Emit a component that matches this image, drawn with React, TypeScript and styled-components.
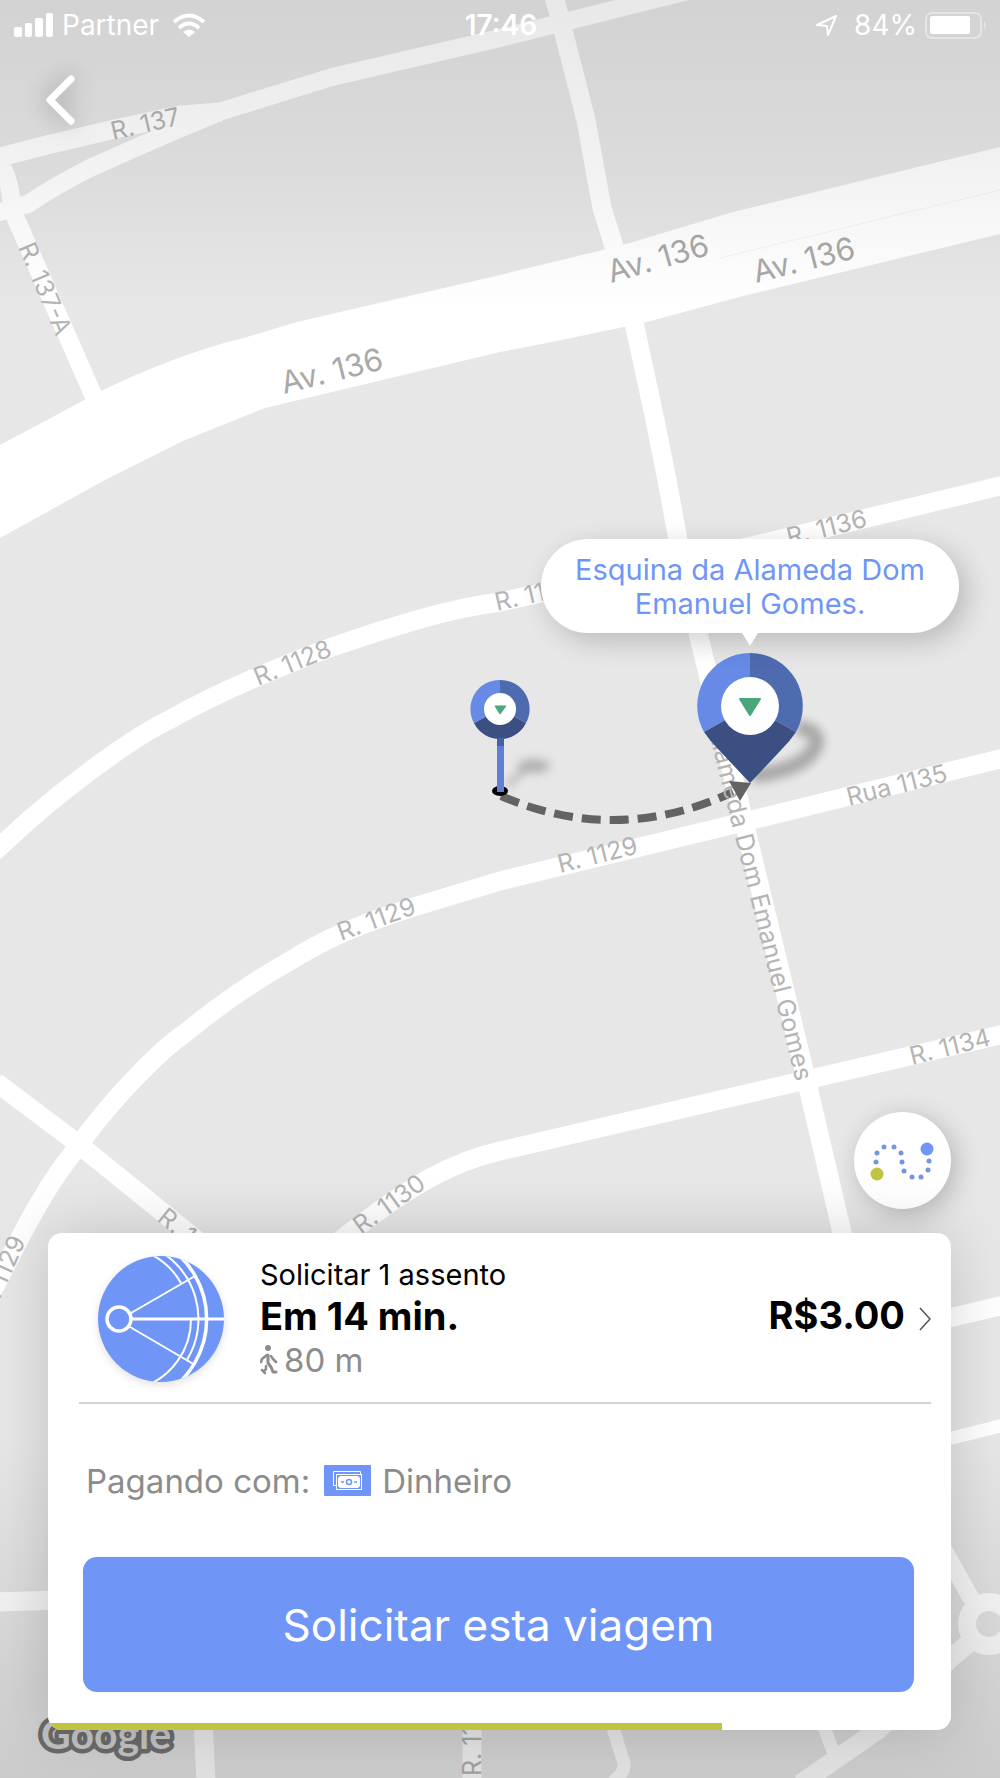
import React from "react";
import styled, { createGlobalStyle } from "styled-components";

const BLUE = "#6f95f7";
const LIME = "#bfc540";

const GlobalStyle = createGlobalStyle`
  * { box-sizing: border-box; }
  body {
    margin: 0;
    background: #e7e7e7;
    font-family: Inter, "Liberation Sans", sans-serif;
  }
  button { font-family: inherit; border: 0; padding: 0; cursor: pointer; }
`;

const Screen = styled.main`
  position: relative;
  display: flex;
  flex-direction: column;
  min-height: 100vh;
  overflow: hidden;
  isolation: isolate;
`;

const MapLayer = styled.div`
  position: absolute;
  inset: 0;
  z-index: -1;
`;

const MapCanvas = styled.svg`
  position: absolute;
  inset: 0;
  width: 100%;
  height: 100%;
`;

const Shade = styled.div`
  position: absolute;
  inset: 0;
  background:
    linear-gradient(rgba(0, 0, 0, 0.09), rgba(0, 0, 0, 0.05) 170px, transparent 310px),
    linear-gradient(to top, rgba(0, 0, 0, 0.12), transparent 340px);
`;

const StreetLabel = styled.text<{ $large?: boolean }>`
  font-family: Inter, sans-serif;
  font-size: ${(p) => (p.$large ? 31 : 25)}px;
  fill: ${(p) => (p.$large ? "#a9a9a9" : "#b5b5b5")};
`;

const Watermark = styled.text`
  font-family: Lato, sans-serif;
  font-size: 41px;
  font-weight: 700;
  fill: #dadada;
  stroke: #777;
  stroke-width: 9px;
  stroke-linejoin: round;
  paint-order: stroke;
`;

const Bubble = styled.div`
  position: absolute;
  left: 75%;
  top: 539px;
  width: 418px;
  padding: 14px 24px 12px;
  transform: translateX(-50%);
  border-radius: 47px;
  background: #fff;
  color: ${BLUE};
  font-size: 29px;
  line-height: 34px;
  text-align: center;
  box-shadow: 8px 8px 28px rgba(0, 0, 0, 0.2);

  &::after {
    content: "";
    position: absolute;
    top: 100%;
    left: 50%;
    margin-left: -8px;
    border: 8px solid transparent;
    border-top: 13px solid #fff;
    border-bottom: 0;
  }
`;

const StatusBar = styled.header`
  display: grid;
  grid-template-columns: 1fr auto 1fr;
  align-items: center;
  height: 50px;
  padding: 0 12px 0 14px;
  color: #fff;
  font-size: 28px;
  line-height: 32px;
`;

const StatusGroup = styled.div<{ $end?: boolean }>`
  display: flex;
  align-items: center;
  gap: ${(p) => (p.$end ? 8 : 9)}px;
  justify-content: ${(p) => (p.$end ? "flex-end" : "flex-start")};
`;

const Carrier = styled.span`
  margin-right: 4px;
`;

const Clock = styled.time`
  font-weight: 600;
`;

const LocationIcon = styled.svg`
  margin-right: 8px;
`;

const BackButton = styled.button`
  align-self: flex-start;
  width: 60px;
  height: 64px;
  margin: 18px 0 0 29px;
  background: none;
  svg {
    display: block;
    overflow: visible;
    filter: drop-shadow(0 0 12px rgba(0, 0, 0, 0.35));
  }
`;

const BottomArea = styled.section`
  display: flex;
  flex-direction: column;
  gap: 24px;
  margin-top: auto;
  padding: 0 49px 48px 48px;
`;

const RouteButton = styled.button`
  align-self: flex-end;
  width: 97px;
  height: 97px;
  border-radius: 50%;
  background: #fff;
  box-shadow: 5px 5px 26px rgba(0, 0, 0, 0.22);
`;

const Card = styled.article`
  display: flex;
  flex-direction: column;
  border-radius: 14px;
  background: #fff;
  overflow: hidden;
  box-shadow: 0 0 60px rgba(0, 0, 0, 0.17);
`;

const TripRow = styled.button`
  display: flex;
  align-items: center;
  margin: 0 20px 0 31px;
  padding: 23px 0 20px 19px;
  border-bottom: 2px solid #d2d2d2;
  background: none;
  color: #000;
  text-align: left;
`;

const TripBadge = styled.svg`
  flex: none;
  margin-right: 36px;
  border-radius: 50%;
  background: ${BLUE};
  box-shadow: 0 3px 8px rgba(0, 0, 0, 0.12);
`;

const TripInfo = styled.span`
  display: flex;
  flex: 1;
  flex-direction: column;
`;

const Seats = styled.span`
  font-size: 29px;
  line-height: 36px;
`;

const Eta = styled.strong`
  font-size: 38px;
  line-height: 46px;
`;

const Walk = styled.span`
  display: flex;
  align-items: center;
  gap: 6px;
  color: #8c8c8c;
  font-size: 33px;
  line-height: 42px;
`;

const Price = styled.strong`
  padding: 0 14px 8px 0;
  font-size: 38px;
  line-height: 46px;
`;

const Payment = styled.div`
  display: flex;
  align-items: center;
  height: 153px;
  padding: 0 38px;
  color: #8c8c8c;
  font-size: 33px;
  line-height: 42px;
`;

const CashIcon = styled.svg`
  margin: 0 11px 0 14px;
`;

const RequestButton = styled.button`
  height: 135px;
  margin: 0 37px 31px 35px;
  border-radius: 14px;
  background: ${BLUE};
  color: #fff;
  font-size: 44px;
  line-height: 56px;
`;

const Progress = styled.div`
  height: 7px;
`;

const ProgressFill = styled.div`
  height: 100%;
  background: ${LIME};
`;

const roads: { d: string; w?: number }[] = [
  { d: "M0 157 L47 145 L115 129 L180 115 L222 112" },
  { d: "M-4 213 L28 204 Q58 184 90 168 L160 137 L222 111 L332 77 L500 38 L740 -22", w: 18 },
  { d: "M-4 158 Q10 174 12 208", w: 18 },
  { d: "M13 212 L94 397", w: 18 },
  { d: "M554 -4 L563 30 L586 120 L602 208 L617 256" },
  { d: "M633 318 L655 420 L667 480 L678 540 L698 633 L746 830 L804 1070 L852 1275" },
  { d: "M-8 854 L29 820 Q66 788 105 760 T167 721 Q210 697 257 677 T335 646 Q378 631 420 619 T500 602 L739 549 L1004 485" },
  { d: "M-8 1292 L21 1236 Q48 1184 73 1153 L84 1138 Q108 1106 137 1076 T184 1034 Q208 1014 234 996 T288 962 Q312 947 338 935 T417 906 L500 881 L760 818 L1004 758" },
  { d: "M-4 1082 L77 1143 L240 1275" },
  { d: "M310 1265 L347 1235 Q370 1217 390 1203 T430 1178 Q465 1159 500 1151 L806 1080 L1004 1034" },
  { d: "M940 1320 L1004 1305" },
  { d: "M940 1441 L1004 1425", w: 13 },
  { d: "M-4 1602 L60 1600" },
  { d: "M203 1720 L206 1782" },
  { d: "M472 1720 V1782" },
  { d: "M612 1725 L624 1763 Q625 1774 612 1782", w: 13 },
  { d: "M823 1725 L834 1754", w: 13 },
  { d: "M800 1784 L878 1730 L951 1658 L975 1638" },
  { d: "M940 1543 L976 1607", w: 17 },
];

const labels: { text: string; x: number; y: number; r: number; large?: boolean; end?: boolean }[] = [
  { text: "R. 137", x: 113, y: 140, r: -13 },
  { text: "R. 137-A", x: 18, y: 247, r: 67 },
  { text: "Av. 136", x: 284, y: 394, r: -14, large: true },
  { text: "Av. 136", x: 611, y: 283, r: -16, large: true },
  { text: "Av. 136", x: 756, y: 283, r: -14, large: true },
  { text: "R. 1128", x: 258, y: 686, r: -22 },
  { text: "R. 1128", x: 497, y: 611, r: -13 },
  { text: "R. 1136", x: 789, y: 546, r: -14 },
  { text: "Rua 1135", x: 849, y: 806, r: -14 },
  { text: "R. 1129", x: 560, y: 873, r: -14 },
  { text: "R. 1129", x: 341, y: 941, r: -20 },
  { text: "R. 1134", x: 912, y: 1065, r: -14 },
  { text: "R. 1130", x: 361, y: 1235, r: -36 },
  { text: "R. 1131", x: 156, y: 1220, r: 39 },
  { text: "R. 1129", x: -7, y: 1315, r: -66 },
  { text: "R. 1131", x: 481, y: 1776, r: -90 },
  { text: "Alameda Dom Emanuel Gomes", x: 796, y: 1082, r: 76, end: true },
];

function CityMap() {
  return (
    <MapCanvas viewBox="0 0 1000 1778" preserveAspectRatio="xMidYMin slice" aria-hidden="true">
      <rect width="1000" height="1778" fill="#e7e7e7" />
      <g fill="none" stroke="#fff" strokeLinejoin="round">
        {roads.map((road) => (
          <path key={road.d} d={road.d} strokeWidth={road.w ?? 19} />
        ))}
        <circle cx="989" cy="1624" r="22" strokeWidth="18" />
      </g>
      <path
        fill="#fff"
        d="M0 445 L47 420 L101 391 Q136 374 173 360 T247 337 L297 322 L500 275 L623 245 L733 212 L1000 147 V234 L747 295 L643 323 L547 343 L500 352 L265 408 L183 441 L105 480 L0 538Z"
      />
      <path d="M720 258 L1000 190" stroke="#f4f4f4" strokeWidth="1" fill="none" />
      <path d="M501 796 Q617 846 733 792" fill="none" stroke="#636363" strokeWidth="8" strokeDasharray="19 9" />
      {labels.map((l) => (
        <StreetLabel
          key={`${l.x}-${l.y}`}
          $large={l.large}
          textAnchor={l.end ? "end" : "start"}
          transform={`translate(${l.x} ${l.y}) rotate(${l.r})`}
        >
          {l.text}
        </StreetLabel>
      ))}
      <path d="M729 781 L751 783 L740 801Z" fill="#636363" />
      <Watermark x="41" y="1749">Google</Watermark>
    </MapCanvas>
  );
}

function Pins() {
  return (
    <MapCanvas viewBox="0 0 1000 1778" preserveAspectRatio="xMidYMin slice" aria-hidden="true">
      <defs>
        <filter id="soft" x="-50%" y="-50%" width="200%" height="200%">
          <feGaussianBlur stdDeviation="5" />
        </filter>
      </defs>
      <g filter="url(#soft)">
        <ellipse cx="534" cy="766" rx="16" ry="7" opacity="0.24" />
        <path d="M507 786 L524 770" stroke="#000" strokeWidth="5" opacity="0.25" />
      </g>
      <path d="M500 709 V680 A29 29 0 0 1 526 723Z" fill="#4f6bb0" />
      <path d="M500 709 L526 723 A29 29 0 0 1 474 723Z" fill="#3b4f83" />
      <path d="M500 709 L474 723 A29 29 0 0 1 500 680Z" fill="#668ae6" />
      <circle cx="500" cy="709" r="16" fill="#fff" />
      <path d="M495 706 H506 L500 714Z" fill="#48a77b" stroke="#48a77b" strokeLinejoin="round" />
      <ellipse cx="500" cy="791" rx="8" ry="5" fill="#000" />
      <path d="M497 738 H504 V792 H497Z" fill="#5f7fd6" />
      <path d="M497 738 H504 V746 H497Z" fill="#4761a8" />

      <path
        d="M752 776 Q786 772 804 760 Q821 746 815 735 Q810 728 796 728"
        fill="none"
        stroke="#000"
        strokeWidth="15"
        opacity="0.27"
        filter="url(#soft)"
      />
      <path d="M750 706 V653 A53 53 0 0 1 796 732Z" fill="#4f6bb0" />
      <path d="M750 706 L704 732 A53 53 0 0 1 750 653Z" fill="#668ae6" />
      <path d="M750 706 L796 732 Q790 741 782 749 L750 783 L718 749 Q710 741 704 732Z" fill="#3b4f83" />
      <circle cx="750" cy="706" r="29" fill="#fff" />
      <path d="M740 699 H760 L750 715Z" fill="#48a77b" stroke="#48a77b" strokeWidth="2" strokeLinejoin="round" />
    </MapCanvas>
  );
}

const routeDots = [
  [22, 50], [23, 41], [30, 35], [40, 35], [47, 41], [48, 50],
  [50, 59], [58, 65], [67, 65], [74, 58], [75, 49],
];

const progress = 674 / 903;

export default function App() {
  return (
    <>
      <GlobalStyle />
      <Screen>
        <MapLayer>
          <CityMap />
          <Shade />
          <Pins />
          <Bubble>Esquina da Alameda Dom Emanuel Gomes.</Bubble>
        </MapLayer>

        <StatusBar>
          <StatusGroup>
            <svg width="39" height="24" viewBox="0 0 39 24" fill="#fff" aria-hidden="true">
              <rect y="14" width="8" height="10" rx="2" />
              <rect x="11" y="10" width="7" height="14" rx="2" />
              <rect x="21" y="5" width="8" height="19" rx="2" />
              <rect x="32" width="7" height="24" rx="2" />
            </svg>
            <Carrier>Partner</Carrier>
            <svg width="34" height="24" viewBox="0 0 34 24" aria-hidden="true">
              <path d="M2 9 Q17 -4 32 9" fill="none" stroke="#fff" strokeWidth="4" />
              <path d="M7 15 Q17 6 27 15" fill="none" stroke="#fff" strokeWidth="4" />
              <path d="M11 19 Q17 14 23 19 L17 24Z" fill="#fff" />
            </svg>
          </StatusGroup>
          <Clock>17:46</Clock>
          <StatusGroup $end>
            <LocationIcon width="23" height="23" viewBox="0 0 23 23" aria-hidden="true">
              <path d="M2 11 L21 2 L13 21 L12 12Z" fill="none" stroke="#fff" strokeWidth="2" strokeLinejoin="round" />
            </LocationIcon>
            <span>84%</span>
            <svg width="63" height="27" viewBox="0 0 63 27" aria-hidden="true">
              <rect x="1" y="1" width="55" height="25" rx="6" fill="none" stroke="#fff" strokeOpacity="0.4" strokeWidth="2" />
              <rect x="5" y="4" width="40" height="18" rx="2" fill="#fff" />
              <path d="M59 9 Q63 13 59 18Z" fill="#fff" opacity="0.4" />
            </svg>
          </StatusGroup>
        </StatusBar>

        <BackButton type="button" aria-label="Voltar">
          <svg width="60" height="64" viewBox="0 0 60 64" aria-hidden="true">
            <path d="M42 11 L21 32 L42 53" fill="none" stroke="#fff" strokeWidth="7" strokeLinecap="round" strokeLinejoin="round" />
          </svg>
        </BackButton>

        <BottomArea>
          <RouteButton type="button" aria-label="Ver rota">
            <svg width="97" height="97" viewBox="0 0 97 97" aria-hidden="true">
              {routeDots.map(([x, y]) => (
                <circle key={`${x}-${y}`} cx={x} cy={y} r="2.5" fill="#7595e0" />
              ))}
              <circle cx="23" cy="62" r="6.5" fill={LIME} />
              <circle cx="73" cy="37" r="6.5" fill={BLUE} />
            </svg>
          </RouteButton>

          <Card>
            <TripRow type="button">
              <TripBadge width="126" height="126" viewBox="0 0 126 126" aria-hidden="true">
                <g fill="none" stroke="#fff">
                  <circle cx="21" cy="63" r="12" strokeWidth="3.5" />
                  <path d="M34 63 H126" strokeWidth="3" />
                  <path d="M33 57 L97 20 M32 71 L97 109" strokeWidth="2" />
                  <path d="M64 -13 A87 87 0 0 1 64 139" strokeWidth="3.5" />
                  <path d="M45 -5 A72 72 0 0 1 83 27 M93 63 A72 72 0 0 1 45 131" strokeWidth="2" />
                  <path d="M54 -9 A79 79 0 0 1 89 104" strokeWidth="2" />
                </g>
              </TripBadge>
              <TripInfo>
                <Seats>Solicitar 1 assento</Seats>
                <Eta>Em 14 min.</Eta>
                <Walk>
                  <svg width="18" height="30" viewBox="0 0 18 30" fill="none" stroke="#8c8c8c" strokeLinecap="round" strokeLinejoin="round" aria-hidden="true">
                    <circle cx="8" cy="3" r="3" fill="#8c8c8c" stroke="none" />
                    <path d="M8 10 L8 18 L11 22 L13 27 H16" strokeWidth="3" />
                    <path d="M7 10 L2 14 L1 17 M11 11 L13 14 L16 17" strokeWidth="2.5" />
                    <path d="M6 21 L6 24 L5 25 M2 25 L5 28" strokeWidth="2.5" />
                  </svg>
                  80 m
                </Walk>
              </TripInfo>
              <Price>R$3.00</Price>
              <svg width="12" height="24" viewBox="0 0 12 24" aria-hidden="true">
                <path d="M1 1 L11 12 L1 23" fill="none" stroke="#555" strokeWidth="1.5" />
              </svg>
            </TripRow>

            <Payment>
              <span>Pagando com:</span>
              <CashIcon width="47" height="31" viewBox="0 0 47 31" aria-hidden="true">
                <rect width="47" height="31" fill={BLUE} rx="1" />
                <g fill="none" stroke="#fff">
                  <path d="M12 20.500 H9.500 V6.500 H36.500 V9" />
                  <rect x="12.500" y="9.500" width="25" height="15" />
                </g>
                <path d="M16 11 H34 L36 13 V21 L34 23 H16 L14 21 V13Z" fill="#fff" />
                <circle cx="25" cy="17" r="2.500" fill="#fff" stroke={BLUE} strokeWidth="1.500" />
                <path d="M17 17 H20 M30 17 H33" stroke={BLUE} strokeWidth="1.500" />
              </CashIcon>
              <span>Dinheiro</span>
            </Payment>

            <RequestButton type="button">Solicitar esta viagem</RequestButton>
            <Progress role="progressbar" aria-label="Tempo restante" aria-valuenow={Math.round(progress * 100)}>
              <ProgressFill style={{ width: `${progress * 100}%` }} />
            </Progress>
          </Card>
        </BottomArea>
      </Screen>
    </>
  );
}
